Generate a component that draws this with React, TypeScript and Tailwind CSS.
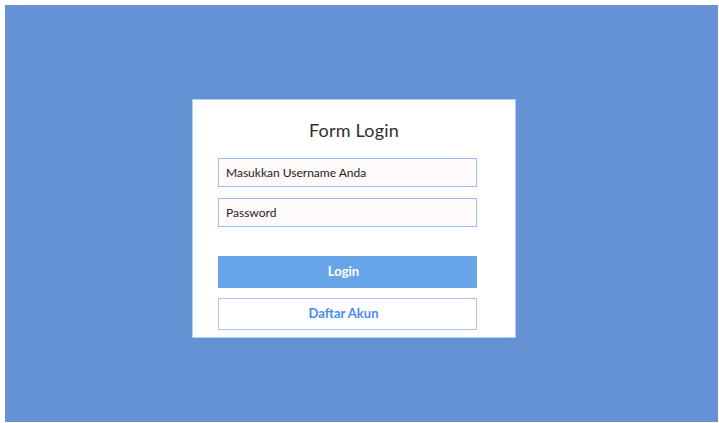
import { useState } from "react";

export default function App() {
  const [username, setUsername] = useState("");
  const [password, setPassword] = useState("");

  return (
    <div className="w-[719px] h-[423px] bg-white pt-[5px] pl-[5px] pr-[1px] pb-[1px] font-['Lato','Open_Sans',sans-serif]">
      <div className="w-full h-full bg-[#6591d5] pl-[187px] pt-[94px]">
        {/* Login card */}
        <form
          onSubmit={e => e.preventDefault()}
          className="w-[324px] h-[239px] bg-white border border-[#b9cdf0] pt-[17px] flex flex-col"
        >
          <h1 className="text-center text-[18px] leading-[26px] text-[#2e2e2e] tracking-[0.2px]">Form Login</h1>

          <div className="pl-[25px] flex flex-col">
            <input
              type="text"
              value={username}
              onChange={e => setUsername(e.target.value)}
              placeholder="Masukkan Username Anda"
              className="mt-[15px] w-[259px] h-[29px] px-[7px] bg-[#fffafa] border border-[#9ebcef] text-[12px] text-[#222] placeholder:text-[#222] outline-none"
            />
            <input
              type="password"
              value={password}
              onChange={e => setPassword(e.target.value)}
              placeholder="Password"
              className="mt-[11px] w-[259px] h-[29px] px-[7px] bg-[#fffafa] border border-[#9ebcef] text-[12px] text-[#222] placeholder:text-[#222] outline-none"
            />

            <button
              type="submit"
              className="mt-[29px] w-[259px] h-[32px] pr-[8px] bg-[#68a4e8] text-white text-[13px] font-bold"
            >
              Login
            </button>
            <button
              type="button"
              className="mt-[10px] w-[259px] h-[32px] pr-[8px] bg-white border border-[#a8c5f5] text-[#4a8aef] text-[13px] font-bold"
            >
              Daftar Akun
            </button>
          </div>
        </form>
      </div>
    </div>
  );
}
